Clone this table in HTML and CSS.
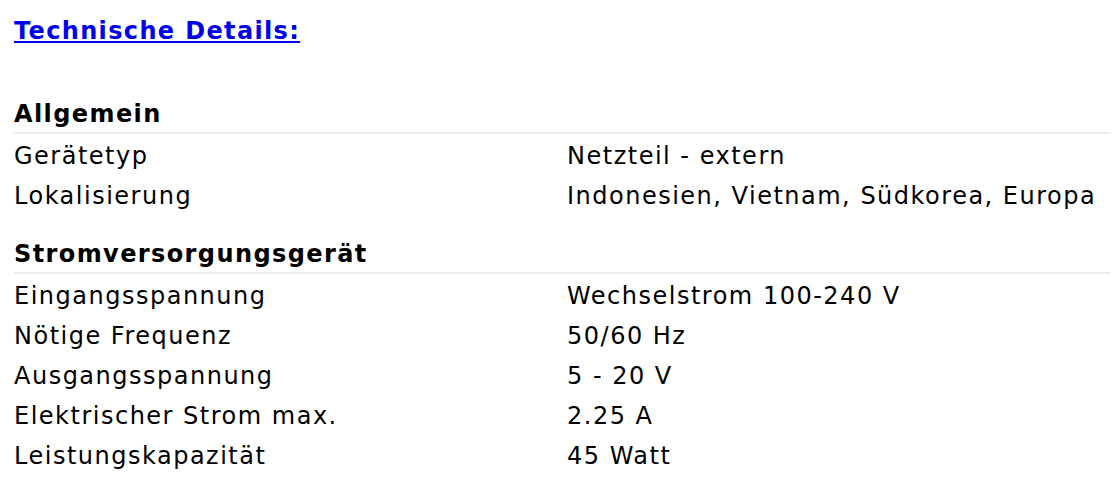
FILE: index.html
```html
<!DOCTYPE html>
<html lang="de">
<head>
<meta charset="utf-8">
<link rel="stylesheet" href="styles.css">
</head>
<body>
<div class="page">
  <h2 class="title"><a href="#">Technische Details:</a></h2>
  <table class="specs">
    <tbody>
      <tr class="group"><th colspan="2">Allgemein</th></tr>
      <tr><td class="k">Gerätetyp</td><td class="v">Netzteil - extern</td></tr>
      <tr><td class="k">Lokalisierung</td><td class="v">Indonesien, Vietnam, Südkorea, Europa</td></tr>
      <tr class="group"><th colspan="2">Stromversorgungsgerät</th></tr>
      <tr><td class="k">Eingangsspannung</td><td class="v">Wechselstrom 100-240 V</td></tr>
      <tr><td class="k">Nötige Frequenz</td><td class="v">50/60 Hz</td></tr>
      <tr><td class="k">Ausgangsspannung</td><td class="v">5 - 20 V</td></tr>
      <tr><td class="k">Elektrischer Strom max.</td><td class="v">2.25 A</td></tr>
      <tr><td class="k">Leistungskapazität</td><td class="v">45 Watt</td></tr>
    </tbody>
  </table>
</div>
</body>
</html>
```
FILE: styles.css
```css
html, body {
  margin: 0;
  padding: 0;
  background: #fff;
}
.page {
  padding: 14px 2px 0 14px;
  font-family: "DejaVu Sans", Verdana, sans-serif;
  font-size: 24px;
  letter-spacing: 1.5px;
  color: #000;
}
.title {
  margin: 0 0 50px 0;
  font-size: 24px;
  font-weight: bold;
  line-height: 34px;
  letter-spacing: 1.35px;
}
.title a {
  color: #0000ee;
  text-decoration: underline;
}
.specs {
  width: 100%;
  border-collapse: collapse;
}
.specs th {
  text-align: left;
  font-weight: bold;
  letter-spacing: 1.4px;
  padding: 22px 0 2px 0;
  line-height: 32px;
  border-bottom: 2px solid #ececec;
}
.specs tr.group:first-child th {
  padding-top: 0;
}
.specs td {
  padding: 0;
  line-height: 40px;
  vertical-align: top;
}
.specs tr.group + tr td {
  padding-top: 2px;
}
.specs td.k {
  width: 553px;
}
```
